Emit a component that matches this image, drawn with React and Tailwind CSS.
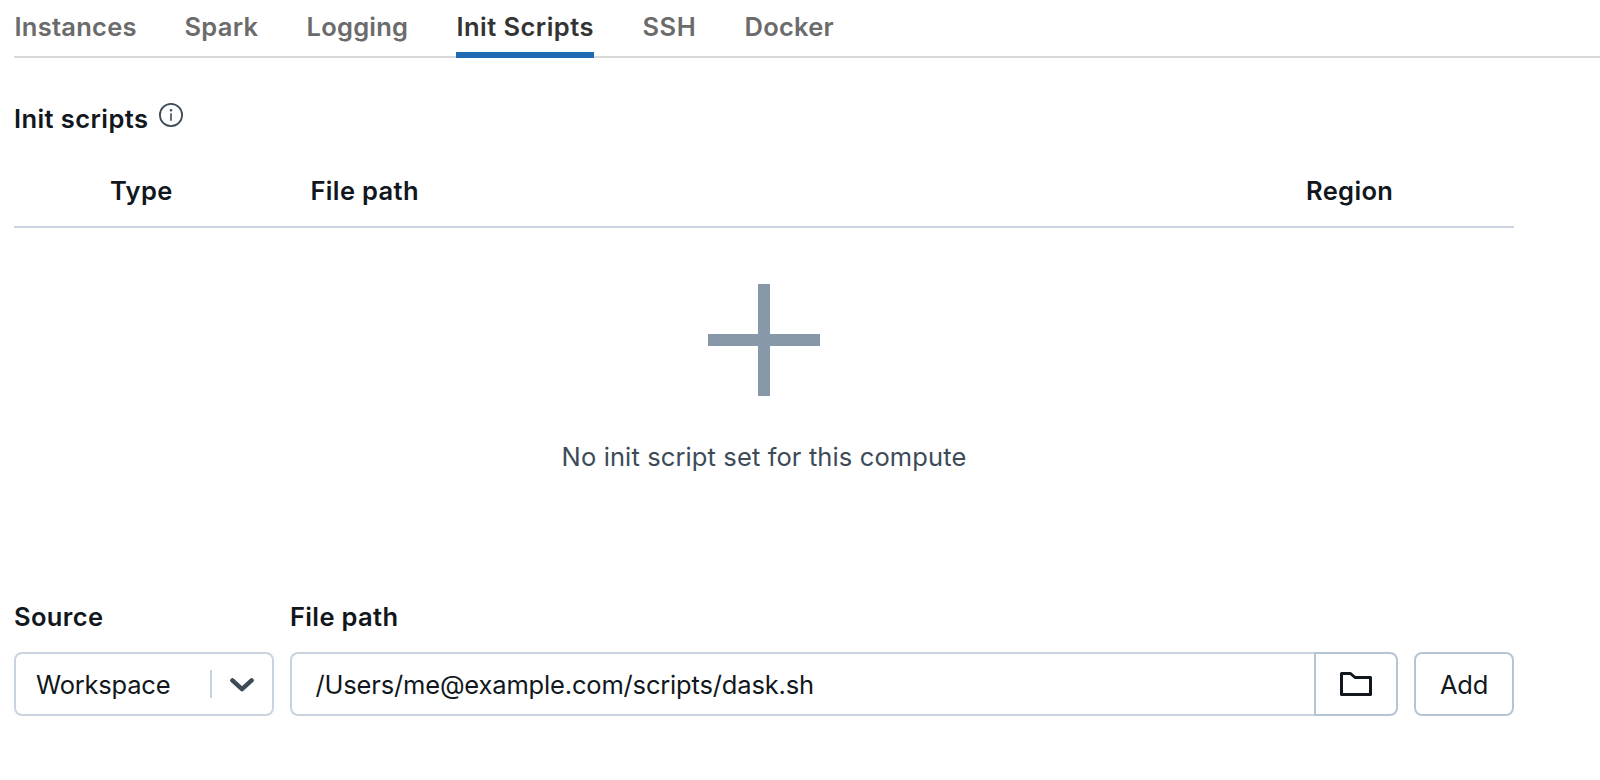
const TABS = [
  { label: "Instances", box: "w-[122px]", tracking: "tracking-[0.25px]" },
  { label: "Spark", box: "w-[74px]", tracking: "tracking-[0.25px]" },
  { label: "Logging", box: "w-[102px]", tracking: "tracking-[0.25px]" },
  { label: "Init Scripts", box: "w-[138px]", tracking: "tracking-[0.45px]", active: true },
  { label: "SSH", box: "w-[54px]", tracking: "tracking-[0.5px]" },
  { label: "Docker", box: "w-[90px]", tracking: "tracking-[0.25px]" },
];

function Tabs() {
  return (
    <nav className="ml-3.5 flex h-[58px] gap-12 text-[25.5px] leading-8 font-semibold text-[#6b6b6b] shadow-[inset_0_-2px_0_#d9d9d9]">
      {TABS.map((tab) => (
        <button
          key={tab.label}
          className={`${tab.box} ${tab.tracking} ${
            tab.active ? "border-b-6 border-[#2069b4] text-[#333333]" : ""
          } flex h-[58px] items-start pt-[11px] pl-[0.5px] whitespace-nowrap`}
        >
          {tab.label}
        </button>
      ))}
    </nav>
  );
}

function InfoIcon() {
  return (
    <svg className="mt-[-9px] ml-[11px] size-6" viewBox="0 0 24 24" fill="none">
      <circle cx="12" cy="12" r="11.1" stroke="#3d4b58" strokeWidth="1.8" />
      <path d="M12 10.3V17.8" stroke="#3d4b58" strokeWidth="1.6" />
      <circle cx="12" cy="7.2" r="1.2" fill="#3d4b58" />
    </svg>
  );
}

function EmptyState() {
  return (
    <div className="flex h-[372px] flex-col items-center pt-14">
      <svg className="size-28" viewBox="0 0 112 112" fill="#8799a8">
        <path d="M50 0h12v50h50v12H62v50H50V62H0V50h50z" />
      </svg>
      <p className="mt-[45px] text-[25.5px] leading-8 tracking-[0.12px] whitespace-nowrap text-[#3d4b58]">
        No init script set for this compute
      </p>
    </div>
  );
}

function Field({ label, box, children }) {
  return (
    <div className={box}>
      <div className="mb-[10px] flex h-[42px] items-start pt-px text-[25.5px] leading-8 font-semibold tracking-[0.35px]">
        {label}
      </div>
      {children}
    </div>
  );
}

export default function App() {
  return (
    <main className="h-[780px] w-[1600px] overflow-hidden bg-white text-[25.5px] leading-8 text-[#11171c] font-[Inter,'Liberation_Sans',sans-serif]">
      <Tabs />
      <section className="ml-3.5 w-[1500px]">
        <h2 className="flex h-[94px] items-center pt-[28px] font-semibold tracking-[0.42px]">
          Init scripts
          <InfoIcon />
        </h2>
        <div className="flex h-[76px] items-start border-b-2 border-[#cbd5e1] pt-[23px] font-semibold tracking-[0.35px]">
          <span className="w-[296px] pl-[96px]">Type</span>
          <span className="grow pl-[0.5px]">File path</span>
          <span className="w-[208px]">Region</span>
        </div>
        <EmptyState />
        <div className="flex">
          <Field label="Source" box="w-[260px]">
            <button className="flex h-16 w-full items-center rounded-lg border-2 border-[#c9d3de] pl-5">
              <span className="w-[174px] pt-[2px] text-left tracking-[-0.2px]">Workspace</span>
              <span className="h-7 w-0.5 bg-[#c9d3de]" />
              <svg className="mt-[2px] ml-[18px] h-4 w-6" viewBox="0 0 24 16" fill="none">
                <path d="M2.4 3.4L12 12.2L21.6 3.4" stroke="#3d4b58" strokeWidth="4.5" strokeLinecap="round" strokeLinejoin="round" />
              </svg>
            </button>
          </Field>
          <Field label="File path" box="ml-4 w-[1108px]">
            <div className="flex h-16">
              <div className="flex grow items-center rounded-l-lg border-2 border-r-0 border-[#c9d3de] pt-[2px] pl-[23.5px] tracking-[-0.17px]">
                /Users/me@example.com/scripts/dask.sh
              </div>
              <button className="flex w-[84px] items-center justify-center rounded-r-lg border-2 border-[#b7c5d2]">
                <svg className="size-8" viewBox="0 0 32 32" fill="none">
                  <path d="M1.5 5.5H10.5L15 9.5H30.5V26.5H1.5Z" stroke="#11171c" strokeWidth="3" strokeLinejoin="round" />
                </svg>
              </button>
            </div>
          </Field>
          <button className="mt-[52px] ml-4 flex h-16 w-[100px] items-center justify-center rounded-lg border-2 border-[#b7c5d2] pt-[2px] tracking-[-0.2px]">
            Add
          </button>
        </div>
      </section>
    </main>
  );
}
